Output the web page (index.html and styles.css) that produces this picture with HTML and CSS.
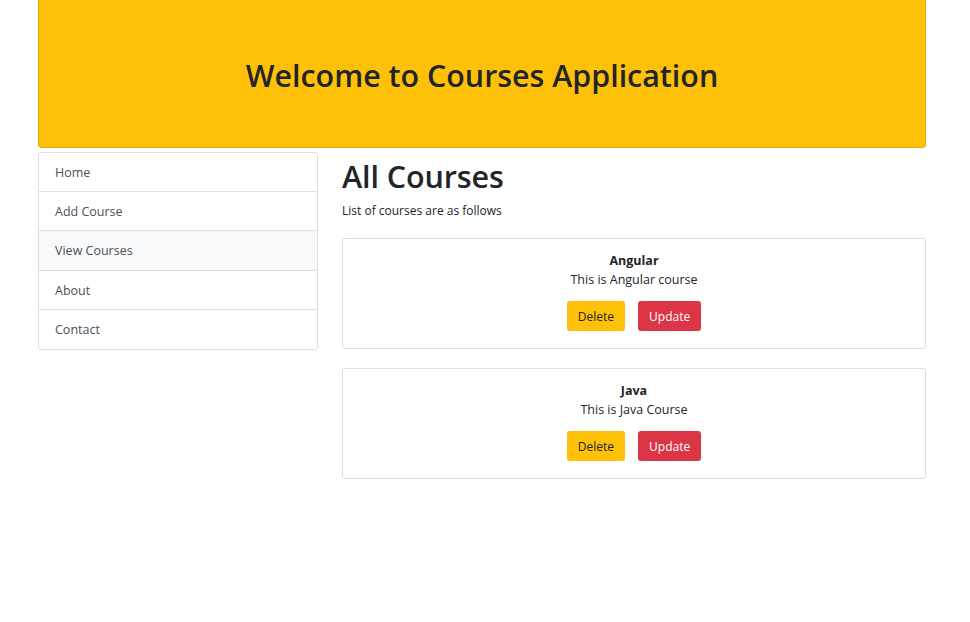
FILE: index.html
```html
<!DOCTYPE html>
<html>
<head>
<meta charset="utf-8">
<link rel="stylesheet" href="styles.css">
</head>
<body>
<div class="container">
  <div class="jumbo">
    <h1 class="jumbo-title">Welcome to Courses Application</h1>
  </div>
  <div class="row">
    <div class="list-group">
      <a class="list-item">Home</a>
      <a class="list-item">Add Course</a>
      <a class="list-item active">View Courses</a>
      <a class="list-item">About</a>
      <a class="list-item">Contact</a>
    </div>
    <div class="main">
      <h1 class="page-title">All Courses</h1>
      <p class="subtitle">List of courses are as follows</p>
      <div class="card">
        <div class="card-title">Angular</div>
        <div class="card-text">This is Angular course</div>
        <div class="actions">
          <button class="btn btn-warning">Delete</button>
          <button class="btn btn-danger">Update</button>
        </div>
      </div>
      <div class="card">
        <div class="card-title">Java</div>
        <div class="card-text">This is Java Course</div>
        <div class="actions">
          <button class="btn btn-warning">Delete</button>
          <button class="btn btn-danger">Update</button>
        </div>
      </div>
    </div>
  </div>
</div>
</body>
</html>
```
FILE: styles.css
```css
* { box-sizing: border-box; }
html, body { margin: 0; padding: 0; background: #fff; }
body {
  font-family: "Open Sans", "Noto Sans", sans-serif;
  color: #212529;
  font-size: 13px;
}
.container {
  width: 888px;
  margin: 0 38px;
}
.jumbo {
  background: #ffc107;
  border: 1px solid #e0a800;
  border-top: none;
  border-radius: 0 0 4px 4px;
  height: 148px;
  display: flex;
  align-items: center;
  justify-content: center;
  margin-bottom: 4px;
}
.jumbo-title {
  margin: 0;
  font-size: 30.4px;
  font-weight: 600;
  letter-spacing: 0;
  color: #212529;
  padding-top: 3px;
}
.row {
  display: grid;
  grid-template-columns: 280px 584px;
  column-gap: 24px;
  align-items: start;
}
.list-group {
  border: 1px solid #dddfe2;
  border-radius: 3px;
  display: flex;
  flex-direction: column;
}
.list-item {
  display: block;
  height: 39.2px;
  line-height: 40px;
  padding: 0 16px;
  color: #495057;
  font-size: 12.5px;
  border-bottom: 1px solid #dddfe2;
}
.list-item:last-child { border-bottom: none; }
.list-item.active { background: #f8f9fa; }
.main { display: flex; flex-direction: column; }
.page-title {
  margin: 4px 0 0;
  font-size: 30.5px;
  font-weight: 600;
  letter-spacing: -0.1px;
  line-height: 40px;
}
.subtitle {
  margin: 6px 0 0;
  font-size: 12px;
  line-height: 18px;
}
.card {
  border: 1px solid #dddfe2;
  border-radius: 3px;
  height: 111px;
  margin-top: 19px;
  display: flex;
  flex-direction: column;
  align-items: center;
  padding-top: 13px;
}
.card:first-of-type { margin-top: 18px; }
.card-title {
  font-weight: 700;
  font-size: 12.5px;
  line-height: 18px;
}
.card-text {
  font-size: 12.5px;
  line-height: 18px;
  margin-top: 1px;
}
.actions {
  display: flex;
  gap: 13px;
  margin-top: 12px;
}
.btn {
  font-family: inherit;
  font-size: 12px;
  height: 30px;
  border: none;
  border-radius: 3px;
  padding: 0 11px;
}
.btn-warning { background: #ffc107; color: #212529; }
.btn-danger { background: #dc3545; color: #fff; }
```
